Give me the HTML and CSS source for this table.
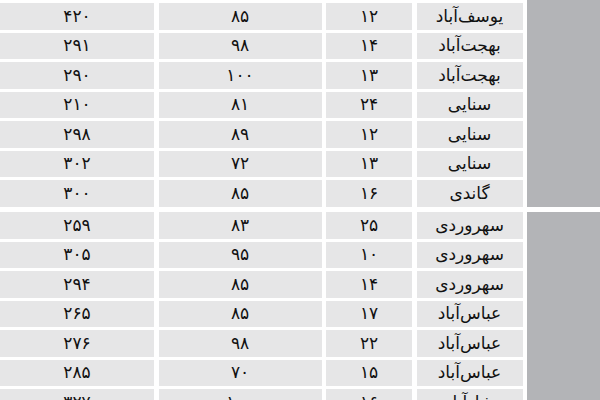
FILE: index.html
```html
<!DOCTYPE html>
<html lang="fa" dir="rtl">
<head>
<meta charset="utf-8">
<link rel="stylesheet" href="styles.css">
</head>
<body>
<div class="table">
  <div class="group first">
    <div class="side"></div>
    <div class="cell">یوسف‌آباد</div><div class="cell">۱۲</div><div class="cell">۸۵</div><div class="cell">۴۲۰</div>
    <div class="cell">بهجت‌آباد</div><div class="cell">۱۴</div><div class="cell">۹۸</div><div class="cell">۲۹۱</div>
    <div class="cell">بهجت‌آباد</div><div class="cell">۱۳</div><div class="cell">۱۰۰</div><div class="cell">۲۹۰</div>
    <div class="cell">سنایی</div><div class="cell">۲۴</div><div class="cell">۸۱</div><div class="cell">۲۱۰</div>
    <div class="cell">سنایی</div><div class="cell">۱۲</div><div class="cell">۸۹</div><div class="cell">۲۹۸</div>
    <div class="cell">سنایی</div><div class="cell">۱۳</div><div class="cell">۷۲</div><div class="cell">۳۰۲</div>
    <div class="cell">گاندی</div><div class="cell">۱۶</div><div class="cell">۸۵</div><div class="cell">۳۰۰</div>
  </div>
  <div class="group second">
    <div class="side"></div>
    <div class="cell">سهروردی</div><div class="cell">۲۵</div><div class="cell">۸۳</div><div class="cell">۲۵۹</div>
    <div class="cell">سهروردی</div><div class="cell">۱۰</div><div class="cell">۹۵</div><div class="cell">۳۰۵</div>
    <div class="cell">سهروردی</div><div class="cell">۱۴</div><div class="cell">۸۵</div><div class="cell">۲۹۴</div>
    <div class="cell">عباس‌آباد</div><div class="cell">۱۷</div><div class="cell">۸۵</div><div class="cell">۲۶۵</div>
    <div class="cell">عباس‌آباد</div><div class="cell">۲۲</div><div class="cell">۹۸</div><div class="cell">۲۷۶</div>
    <div class="cell">عباس‌آباد</div><div class="cell">۱۵</div><div class="cell">۷۰</div><div class="cell">۲۸۵</div>
    <div class="cell">شادآباد</div><div class="cell">۱۶</div><div class="cell">۱۰۰</div><div class="cell">۳۲۷</div>
  </div>
</div>
</body>
</html>
```
FILE: styles.css
```css
html, body {
  margin: 0;
  padding: 0;
  background: #ffffff;
}
body {
  width: 600px;
  height: 400px;
  overflow: hidden;
  font-family: "DejaVu Sans", sans-serif;
  color: #111111;
}
.table {
  display: flex;
  flex-direction: column;
  gap: 5.5px;
}
.group {
  display: grid;
  grid-template-columns: 73px 106px 86px 163px 154px;
  grid-template-rows: repeat(7, 26.5px);
  column-gap: 4.5px;
  row-gap: 3px;
}
.group.first {
  padding-top: 3px;
}
.group.first .side {
  margin-top: -3px;
}
.side {
  grid-row: 1 / span 7;
  grid-column: 1;
  background: #b3b4b7;
}
.cell {
  background: #e6e6e7;
  display: flex;
  align-items: center;
  justify-content: center;
  font-size: 17px;
  line-height: 1;
}
```
